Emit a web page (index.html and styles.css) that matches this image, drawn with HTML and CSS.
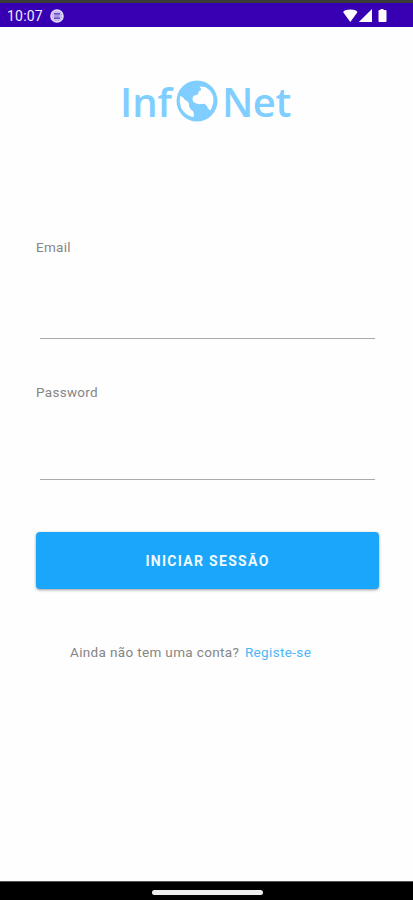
FILE: index.html
```html
<!DOCTYPE html>
<html lang="pt">
<head>
    <meta charset="UTF-8">
    <meta name="viewport" content="width=device-width, initial-scale=1.0">
    <title>InfoNet</title>
    <link rel="stylesheet" href="styles.css">
</head>
<body>
    <header class="status-bar">
        <span class="clock">10:07</span>
        <svg class="debug-icon" viewBox="0 0 14 14">
            <circle cx="7" cy="7" r="5.8" fill="none" stroke="#e2dbfa" stroke-width="2"/>
            <circle cx="7" cy="7" r="5" fill="#cfc4f4"/>
            <path d="M4 4.800h6M4 9.200h6" stroke="#4a22b8" stroke-width="1.3"/>
            <path d="M4.5 7h5" stroke="#8066d2" stroke-width="1"/>
        </svg>
        <svg class="signal-icons" viewBox="0 0 46 16">
            <path d="M0.2 4.2Q1 1.500 7.300 1.500Q13.600 1.500 14.400 4.200L7.3 14Z" fill="#fff"/>
            <path d="M29 1V14H15.800Z" fill="#fff"/>
            <path d="M37.500 1h3v1h2q1 0 1 1v10q0 1-1 1h-6q-1 0-1-1V3q0-1 1-1h1Z" fill="#fff"/>
        </svg>
    </header>

    <main class="login">
        <div class="logo">
            <span class="logo-left">Inf</span>
            <svg class="globe" viewBox="0 0 42 42">
                <circle cx="21" cy="21" r="20.5" fill="#80ceff"/>
                <path d="M23.500 6.500L29 7Q35 10 37 16Q38.500 23 34.500 30.500L32 28.500Q30.500 24 27 23.800Q21 25 17.500 22Q15 18 18.500 15.500L22.500 14Q21.500 11 24.800 10.500Q25.500 8.500 23.500 6.500Z" fill="#fff"/>
                <path d="M4 16Q7 16.500 9 20Q13.500 21.500 13 25.500Q13.500 29 17 31Q18.500 34 17.500 37.200Q9 35.500 5.200 28Q3 22 4 16Z" fill="#fff"/>
            </svg>
            <span class="logo-right">Net</span>
        </div>

        <form class="login-form">
            <label for="email">Email</label>
            <input type="email" id="email" name="email">

            <label for="password">Password</label>
            <input type="password" id="password" name="password">

            <button type="submit">INICIAR SESSÃO</button>
        </form>

        <p class="register">Ainda não tem uma conta? <a href="#">Registe-se</a></p>
    </main>

    <footer class="nav-bar">
        <div class="home-handle"></div>
    </footer>
</body>
</html>
```

FILE: styles.css
```css
* {
    box-sizing: border-box;
}

body {
    margin: 0;
    height: 900px;
    display: flex;
    flex-direction: column;
    overflow: hidden;
    background: #fefefe;
    color: #858585;
    font-family: Roboto, sans-serif;
    font-size: 13.5px;
}

.status-bar {
    height: 27px;
    border-top: 3px solid #3b3b3b;
    background: #3700b3;
    display: flex;
    align-items: center;
    padding: 2px 24px 0 7px;
}

.clock {
    color: #eeeafc;
    font-size: 14px;
    letter-spacing: 0.2px;
    line-height: 16px;
    width: 43px;
}

.debug-icon {
    width: 14px;
    height: 14px;
}

.signal-icons {
    width: 46px;
    height: 16px;
    margin-left: auto;
}

.login {
    flex: 1;
    padding: 53px 34px 0 36px;
}

.logo {
    display: flex;
    height: 44px;
    padding-left: 84px;
    color: #80ceff;
    font-family: "Open Sans", sans-serif;
    font-size: 40px;
    font-weight: 600;
    line-height: 43px;
}

.logo-left {
    width: 56px;
}

.globe {
    width: 42px;
    height: 42px;
    flex: none;
}

.logo-right {
    margin-left: 4px;
    letter-spacing: -0.5px;
}

.login-form {
    display: flex;
    flex-direction: column;
    padding-top: 115px;
}

.login-form label {
    height: 16px;
    line-height: 16px;
    letter-spacing: 0.3px;
}

.login-form input {
    height: 84px;
    margin: 0 4px 45px;
    padding: 40px 0 4px;
    border: none;
    border-bottom: 1px solid #aaa;
    background: none;
    font: inherit;
    outline: none;
}

.login-form #password {
    height: 80px;
    margin-bottom: 52px;
}

.login-form button {
    height: 57px;
    border: none;
    border-radius: 4px;
    background: #1aa7fb;
    box-shadow: 0 1px 3px rgba(0, 0, 0, 0.4);
    color: #f0f9ff;
    font-family: inherit;
    font-size: 14px;
    font-weight: 700;
    letter-spacing: 1.3px;
}

.register {
    margin: 55px 0 0 34px;
    line-height: 16px;
    letter-spacing: 0.35px;
}

.register a {
    margin-left: 2px;
    color: #4db5f8;
    text-decoration: none;
}

.nav-bar {
    height: 19px;
    background: #000;
    border-top: 1px solid #555;
    display: flex;
    justify-content: center;
    padding: 8px 0 0 1px;
}

.home-handle {
    width: 111px;
    height: 5px;
    border-radius: 3px;
    background: #eee;
}
```
